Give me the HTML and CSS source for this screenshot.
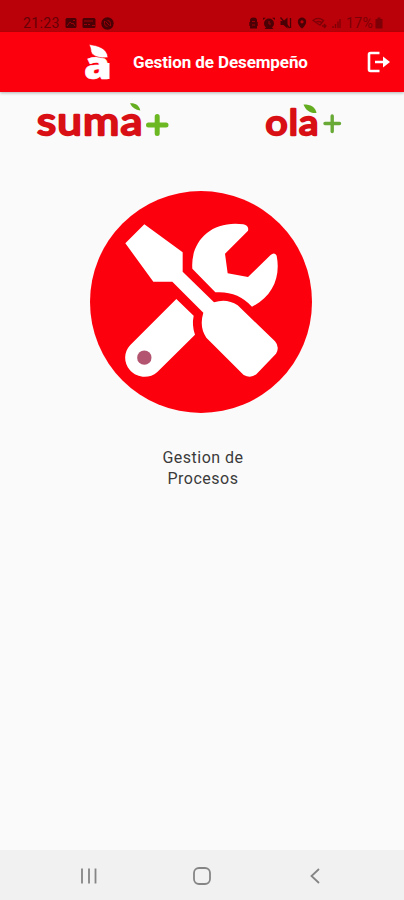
FILE: index.html
```
<!DOCTYPE html>
<html lang="es">
<head>
<meta charset="utf-8">
<title>Gestion de Desempeño</title>
<link rel="stylesheet" href="styles.css">
</head>

<body>

<!-- Status bar -->
<div class="status-bar">
    <div class="status-left">
        <span class="clock">21:23</span>
        <svg class="status-icon" width="12" height="12" viewBox="0 0 12 12">
            <rect x="0.5" y="1" width="11" height="10" rx="1.5"/>
            <path class="cut" d="M2 9l3-4 2 2 1-1 2 3M8 3.5h2"/>
        </svg>
        <svg class="status-icon" width="14" height="12" viewBox="0 0 14 12">
            <rect x="0.5" y="1" width="13" height="10" rx="1.5"/>
            <path class="cut" d="M2 4h9M2 7.5h3M6 7.5h2M10 8.5h3"/>
        </svg>
        <svg class="status-icon" width="13" height="13" viewBox="0 0 13 13">
            <circle cx="6.5" cy="6.5" r="6.2"/>
            <path class="cut" d="M3.500 4v2.500a3 3 0 0 0 3 3M6.500 3.500a3 3 0 0 1 3 3V9M4.500 4.500l4 4"/>
        </svg>
    </div>
    <div class="status-right">
        <svg class="status-icon" width="9" height="12" viewBox="0 0 9 12">
            <path d="M1 5V3.500Q1 .5 4.500.5T8 3.500V5h.7v4H8v2.500H1V9H.3V5z"/>
            <path class="cut" d="M3 4.500h3M3 8h3"/>
        </svg>
        <svg class="status-icon" width="12" height="12" viewBox="0 0 12 12">
            <circle cx="6" cy="6.500" r="5"/>
            <path d="M0 3V.8h3zM12 3V.8H9zM1.500 12l2-2 5 0 2 2z"/>
            <path class="cut" d="M6 4v3h2"/>
        </svg>
        <svg class="status-icon" width="12" height="12" viewBox="0 0 12 12">
            <path d="M.5 4h3l4-3.500v11L3.500 8h-3z"/>
            <path class="line" d="M.5.5l9 10.500M10.500 1v10"/>
        </svg>
        <svg class="status-icon" width="10" height="12" viewBox="0 0 10 12">
            <path fill-rule="evenodd" d="M5 .5a4.200 4.200 0 0 0-4.200 4.200C.8 8 5 11.700 5 11.700S9.200 8 9.200 4.700A4.200 4.200 0 0 0 5 .5zM5 3.200a1.600 1.600 0 1 1 0 3.200 1.600 1.600 0 0 1 0-3.200z"/>
        </svg>
        <svg class="status-icon faint" width="15" height="12" viewBox="0 0 15 12">
            <path class="line" d="M1 3.500Q6-.8 11.500 3.500L8 8.200zM3.500 5.500q3-2 6 0M10 9h4M12 7l2 2-2 2"/>
        </svg>
        <svg class="status-icon faint" width="9" height="12" viewBox="0 0 9 12">
            <path class="line" d="M1 11V9M3.500 11V7M6 11V4.500M8 11V2"/>
        </svg>
        <span class="battery">17%</span>
        <svg class="status-icon faint" width="8" height="12" viewBox="0 0 8 12">
            <path d="M2.500.5h3V2H7.500v9.500H.5V2h2z"/>
        </svg>
    </div>
</div>

<!-- App bar -->
<header class="app-bar">
    <svg class="brand" width="28" height="60" viewBox="0 0 28 60">
        <text class="brand-letter" x="0" y="47" textLength="26" lengthAdjust="spacingAndGlyphs">a</text>
        <path d="M19 31h6.500v16H19z"/>
        <path class="brand-leaf" d="M5 12.500C13 13.500 23 15.500 24 25.500 16 26.500 8 24.500 7 19.500 7 17 6 14.500 5 12.500z"/>
    </svg>
    <h1 class="title">Gestion de Desempeño</h1>
    <svg class="logout" width="24" height="22" viewBox="0 0 24 22">
        <path d="M12.500 2H3.500Q2 2 2 3.500v15Q2 20 3.500 20h9M8 11h10"/>
        <path class="logout-head" d="M16 5.500L23 11l-7 5.500z"/>
    </svg>
</header>

<!-- Product logos -->
<div class="logos">
    <svg class="logo-suma" width="134" height="56" viewBox="0 0 134 56">
        <text class="suma-text" x="1" y="41.500" textLength="106.500" lengthAdjust="spacingAndGlyphs">suma</text>
        <path class="leaf" d="M94 10.200c5-.5 9.500 2 10.300 7.300C99.500 17 96 14.500 94 10.200z"/>
        <path class="suma-plus" d="M112.500 32h17.500M121.200 23.500v17"/>
    </svg>
    <svg class="logo-ola" width="78" height="56" viewBox="0 0 78 56">
        <text class="ola-text" x="0.500" y="41.500" textLength="54" lengthAdjust="spacingAndGlyphs">ola</text>
        <path class="leaf" d="M38.500 11.500C46 11.500 50.500 14 51.500 20 45 20.500 41 17.500 38.500 11.500z"/>
        <path class="ola-plus" d="M60 30.500h14.500M67.200 23v15.500"/>
    </svg>
</div>

<!-- Menu -->
<main class="menu">
    <a class="menu-item">
        <svg class="menu-icon" width="222" height="222" viewBox="30 32 666 666">
            <circle class="disc" cx="363" cy="365" r="333"/>
            <!-- screwdriver -->
            <path d="M193 132L308 216V274L402 366Q440 353 473 375L585 483Q600 500 588 520L529 582Q512 595 491 584L379 472Q357 440 370 397L277 304H220L136 189z"/>
            <!-- wrench -->
            <path d="M337 265C331 185 392 119 490 132Q508 137 504 151L435 220 443 279 504 290 571 225Q583 214 590 226C603 292 576 350 516 379Q472 331 406 336z"/>
            <path d="M289 356L341 406Q335 435 345 463L232 575C207 597 171 593 150 570C130 547 131 514 151 494z"/>
            <circle class="hole" cx="193" cy="532" r="21.500"/>
        </svg>
        <span class="menu-label">Gestion de<br>Procesos</span>
    </a>
</main>

<!-- Navigation bar -->
<nav class="nav-bar">
    <svg width="20" height="20" viewBox="0 0 20 20"><path d="M3 2.500v15M10 2.500v15M16.500 2.500v15"/></svg>
    <svg width="20" height="20" viewBox="0 0 20 20"><rect x="2" y="2" width="16" height="16" rx="5"/></svg>
    <svg width="20" height="20" viewBox="0 0 20 20"><path d="M14 3L6.500 10l7.500 7"/></svg>
</nav>

</body>
</html>
```
FILE: styles.css
```
body {
    margin: 0;
    height: 900px;
    display: flex;
    flex-direction: column;
    background-color: #fafafa;
    font-family: Roboto, sans-serif;
    overflow: hidden;
}

svg {
    display: block;
    flex: none;
}

/* status bar */
.status-bar {
    display: flex;
    justify-content: space-between;
    box-sizing: border-box;
    height: 32px;
    padding: 13px 21px 0 23px;
    background-color: #ba0009;
    color: #650007;
    font-size: 14px;
    line-height: 20px;
}

.status-left, .status-right {
    display: flex;
    align-items: center;
    height: 20px;
    gap: 5px;
}

.clock {
    width: 37px;
    letter-spacing: 0.4px;
}

.battery {
    margin-right: -3px;
    color: #7b0007;
    letter-spacing: 0.3px;
}

.status-icon {
    fill: #4a0005;
}

.status-icon .cut {
    fill: none;
    stroke: #a00008;
    stroke-width: 1;
}

.status-icon .line {
    fill: none;
    stroke: #4a0005;
    stroke-width: 1.3;
}

.faint {
    opacity: 0.55;
}

/* app bar */
.app-bar {
    display: flex;
    align-items: center;
    box-sizing: border-box;
    height: 60px;
    padding: 0 13px 0 84px;
    background-color: #fd000d;
    box-shadow: 0 1px 3px rgba(0, 0, 0, 0.3);
}

.brand {
    fill: #ffffff;
}

.brand-letter {
    font-family: "Open Sans", sans-serif;
    font-size: 38px;
    font-weight: 800;
    stroke: #ffffff;
    stroke-width: 0.6;
}

.brand-leaf {
    stroke: #fd000d;
    stroke-width: 0.6;
}

.title {
    margin: 0 auto 0 21px;
    color: #ffffff;
    font-size: 17px;
    font-weight: 700;
    letter-spacing: -0.1px;
    white-space: nowrap;
}

.logout {
    fill: none;
    stroke: #ffffff;
    stroke-width: 2.6;
}

.logout .logout-head {
    fill: #ffffff;
    stroke: none;
}

/* logos */
.logos {
    display: flex;
    justify-content: space-between;
    padding: 1px 61px 0 36px;
}

.suma-text, .ola-text {
    font-family: Lato, sans-serif;
    font-weight: 400;
    fill: #d90f16;
    stroke: #d90f16;
    stroke-width: 2.4;
    stroke-linejoin: round;
}

.suma-text {
    font-size: 38px;
    letter-spacing: 1px;
}

.ola-text {
    font-size: 34px;
    letter-spacing: 1px;
}

.leaf {
    fill: #64ad20;
}

.suma-plus, .ola-plus {
    fill: none;
    stroke: #6cb822;
    stroke-width: 5;
    stroke-linecap: round;
}

.ola-plus {
    stroke: #69a936;
    stroke-width: 3.4;
}

/* menu */
.menu {
    flex: 1;
    padding-top: 42px;
}

.menu-item {
    display: flex;
    flex-direction: column;
    align-items: center;
    width: 402px;
}

.menu-icon {
    fill: #ffffff;
}

.menu-icon .disc {
    fill: #fd000d;
}

.menu-icon .hole {
    fill: #b35470;
}

.menu-label {
    margin: 35px 0 0 4px;
    color: #3b3b3b;
    font-size: 16px;
    line-height: 20.500px;
    letter-spacing: 0.5px;
    text-align: center;
}

/* navigation bar */
.nav-bar {
    display: flex;
    justify-content: space-between;
    align-items: center;
    box-sizing: border-box;
    height: 50px;
    padding: 2px 79px 0;
    background-color: #f1f1f1;
}

.nav-bar svg {
    fill: none;
    stroke: #858585;
    stroke-width: 1.8;
}
```
